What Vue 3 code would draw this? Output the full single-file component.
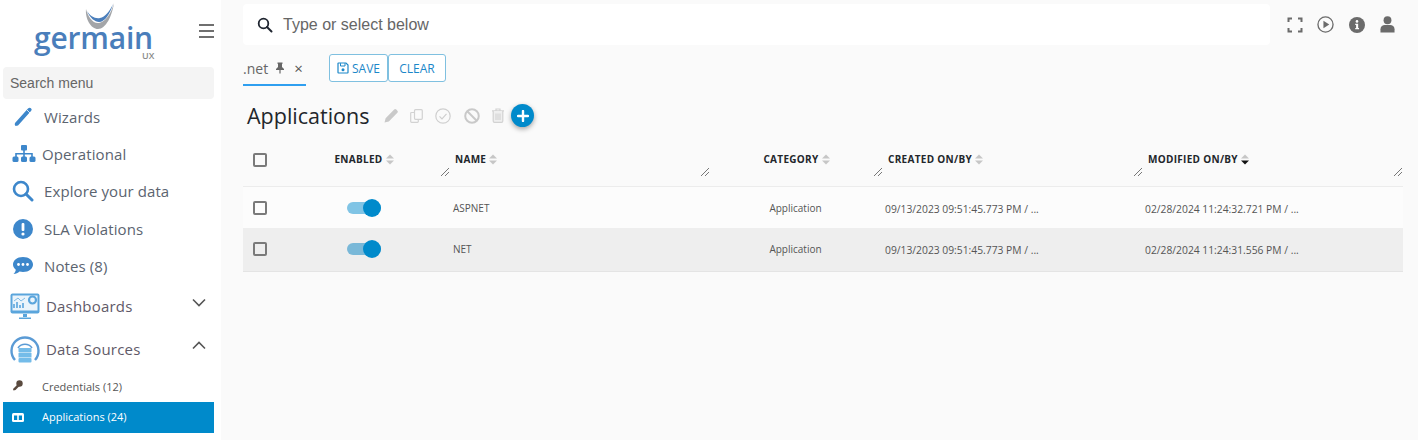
<script setup>
const menu = [
  { label: 'Wizards', icon: 'pencil' },
  { label: 'Operational', icon: 'sitemap' },
  { label: 'Explore your data', icon: 'search' },
  { label: 'SLA Violations', icon: 'alert' },
  { label: 'Notes (8)', icon: 'notes' }
]
const columns = [
  { label: 'ENABLED', cls: 'center' },
  { label: 'NAME', cls: '' },
  { label: 'CATEGORY', cls: 'center' },
  { label: 'CREATED ON/BY', cls: '' },
  { label: 'MODIFIED ON/BY', cls: '', sorted: true }
]
const rows = [
  { name: 'ASPNET', category: 'Application', created: '09/13/2023 09:51:45.773 PM / ...', modified: '02/28/2024 11:24:32.721 PM / ...' },
  { name: 'NET', category: 'Application', created: '09/13/2023 09:51:45.773 PM / ...', modified: '02/28/2024 11:24:31.556 PM / ...' }
]
</script>

<template>
  <div class="page">
    <aside class="sidebar">
      <div class="brand">
        <div class="logo">
          <svg class="swoosh" width="30" height="28" viewBox="0 0 30 28">
            <path d="M1 7 C0 17 6 27 13 27 C21 27 27 14 29 1 C26 12 20 20 14 21 C8 22 3 15 1 7 Z" fill="#a3a5a8" />
            <path d="M2 9 C5 16 10 20 14 20 C20 20 25 12 28 2 C25 9 20 15 15 16 C10 17 5 14 2 9 Z" fill="#4a7ebb" />
          </svg>
          <span class="word">germain</span>
          <span class="ux">UX</span>
        </div>
        <div class="burger"><i></i><i></i><i></i></div>
      </div>
      <div class="search-menu">Search menu</div>
      <nav class="menu">
        <a v-for="m in menu" :key="m.label" class="item">
          <span class="icon">
            <svg v-if="m.icon === 'pencil'" width="22" height="22" viewBox="0 0 22 22">
              <path d="M3 17 L16 2.500 Q17.500 1 19 2.200 Q20.500 3.600 19 5 L6 19.500 L3.500 20 Q2.200 18.600 3 17 Z" fill="#3d87cb" />
              <path d="M15 4 L18 7" stroke="#fff" stroke-width="0.800" />
            </svg>
            <svg v-else-if="m.icon === 'sitemap'" width="24" height="18" viewBox="0 0 24 18">
              <g fill="#3d87cb">
                <rect x="9" y="0" width="6" height="5.500" rx="1" />
                <rect x="0.500" y="11.500" width="6" height="5.500" rx="1.500" />
                <rect x="9" y="11.500" width="6" height="5.500" rx="1.500" />
                <rect x="17.500" y="11.500" width="6" height="5.500" rx="1.500" />
                <path d="M11.200 5 h1.600 v3 h8 v4 h-1.600 v-2.400 h-6.400 v2.400 h-1.600 v-2.400 h-6.400 v2.400 h-1.600 v-4 h8 z" />
              </g>
            </svg>
            <svg v-else-if="m.icon === 'search'" width="22" height="22" viewBox="0 0 22 22">
              <circle cx="9" cy="9" r="7" fill="none" stroke="#3d87cb" stroke-width="2.600" />
              <path d="M14 14 L20 20" stroke="#3d87cb" stroke-width="3" stroke-linecap="round" />
            </svg>
            <svg v-else-if="m.icon === 'alert'" width="22" height="22" viewBox="0 0 22 22">
              <circle cx="11" cy="11" r="10" fill="#3d87cb" />
              <rect x="9.600" y="5" width="2.800" height="8" rx="1" fill="#fff" />
              <circle cx="11" cy="16" r="1.600" fill="#fff" />
            </svg>
            <svg v-else width="22" height="20" viewBox="0 0 22 20">
              <path d="M11 1 C17 1 21 4.500 21 8.500 C21 12.500 17 16 11 16 C9.800 16 8.600 15.800 7.500 15.500 C6 17 4 18 1.500 18 C3 16.500 3.700 15 3.800 13.700 C2 12.300 1 10.500 1 8.500 C1 4.500 5 1 11 1 Z" fill="#3d87cb" />
              <circle cx="6.500" cy="8.500" r="1.400" fill="#fff" />
              <circle cx="11" cy="8.500" r="1.400" fill="#fff" />
              <circle cx="15.500" cy="8.500" r="1.400" fill="#fff" />
            </svg>
          </span>
          <span class="item-label" :class="{ tight: m.icon === 'sitemap' }">{{ m.label }}</span>
        </a>
      </nav>
      <div class="group">
        <svg width="30" height="27" viewBox="0 0 30 27">
          <rect x="0.500" y="0.500" width="29" height="20" rx="2" fill="#5aa5dc" />
          <rect x="2.500" y="2.500" width="25" height="15" fill="#eaf4fb" />
          <path d="M4 15 v-4 M7 15 v-6 M10 15 v-3 M13 15 v-5" stroke="#5aa5dc" stroke-width="1.600" />
          <path d="M4 8 L8 5 L11 8 L15 5" fill="none" stroke="#7fbbe6" stroke-width="1" />
          <circle cx="22.500" cy="7" r="3.500" fill="none" stroke="#5aa5dc" stroke-width="2.200" />
          <path d="M13 21 h4 v3 h-4 z M9 24.500 h12 v1.500 h-12 z" fill="#5aa5dc" />
        </svg>
        <span>Dashboards</span>
        <svg class="chev" width="14" height="9" viewBox="0 0 14 9"><path d="M1 1.500 L7 7.500 L13 1.500" fill="none" stroke="#555" stroke-width="1.600" /></svg>
      </div>
      <div class="group">
        <svg width="30" height="28" viewBox="0 0 30 28">
          <path d="M5 25 A13.500 13.500 0 1 1 25 25" fill="none" stroke="#5b9bd5" stroke-width="2.400" />
          <path d="M8 13 A8.500 8.500 0 0 1 22 13" fill="none" stroke="#5b9bd5" stroke-width="1.600" />
          <rect x="8.500" y="13" width="13" height="4.500" rx="1" fill="#74bce9" />
          <rect x="8.500" y="18" width="13" height="4.500" fill="#74bce9" />
          <rect x="8.500" y="23" width="13" height="4.500" rx="1" fill="#74bce9" />
        </svg>
        <span>Data Sources</span>
        <svg class="chev" width="14" height="9" viewBox="0 0 14 9"><path d="M1 7.500 L7 1.500 L13 7.500" fill="none" stroke="#555" stroke-width="1.600" /></svg>
      </div>
      <div class="sub">
        <svg width="11" height="11" viewBox="0 0 11 11">
          <circle cx="7.500" cy="3.500" r="3.200" fill="#5a4a3f" />
          <path d="M6 4 L1 9 L1.500 10.500 L3.500 10 L8 5.500 Z" fill="#5a4a3f" />
        </svg>
        <span>Credentials (12)</span>
      </div>
      <div class="sub active">
        <svg width="12" height="9" viewBox="0 0 12 9">
          <rect x="0" y="0" width="12" height="9" rx="1.500" fill="#fff" />
          <rect x="2" y="2.500" width="3.200" height="4.500" fill="#008acb" />
          <rect x="6.800" y="2.500" width="3.200" height="4.500" fill="#008acb" />
        </svg>
        <span>Applications (24)</span>
      </div>
    </aside>

    <main class="main">
      <header class="topbar">
        <div class="searchbox">
          <svg width="16" height="16" viewBox="0 0 16 16">
            <circle cx="6.500" cy="6.500" r="4.800" fill="none" stroke="#1f2530" stroke-width="1.800" />
            <path d="M10 10 L14.500 14.500" stroke="#1f2530" stroke-width="2" stroke-linecap="round" />
          </svg>
          <span>Type or select below</span>
        </div>
        <div class="top-icons">
          <svg width="16" height="16" viewBox="0 0 16 16">
            <path d="M1.500 5 V1.500 H5 M11 1.500 H14.500 V5 M14.500 11 V14.500 H11 M5 14.500 H1.500 V11" fill="none" stroke="#6b6b6b" stroke-width="2" />
          </svg>
          <svg width="17" height="17" viewBox="0 0 18 18">
            <circle cx="9" cy="9" r="8" fill="none" stroke="#6b6b6b" stroke-width="1.400" />
            <path d="M6.800 5 L13 9 L6.800 13 Z" fill="#6b6b6b" />
          </svg>
          <svg width="16" height="16" viewBox="0 0 18 18">
            <circle cx="9" cy="9" r="9" fill="#6b6b6b" />
            <circle cx="9" cy="5" r="1.500" fill="#fff" />
            <path d="M7 7.500 H10.300 V12.300 H11.300 V13.800 H7 V12.300 H8 V9 H7 Z" fill="#fff" />
          </svg>
          <svg width="15" height="17" viewBox="0 0 16 18">
            <circle cx="8" cy="4.500" r="4.200" fill="#6b6b6b" />
            <path d="M0.500 17.500 V14 C0.500 11 3 9.500 5 9.500 H11 C13 9.500 15.500 11 15.500 14 V17.500 Z" fill="#6b6b6b" />
          </svg>
        </div>
      </header>

      <div class="tabs">
        <div class="tab">
          <span class="tab-name">.net</span>
          <svg width="10" height="12" viewBox="0 0 10 12"><path d="M2.500 0.500 H7.500 V1.800 L7 2 V5 L9 7 V8 H5.600 V11.500 H4.400 V8 H1 V7 L3 5 V2 L2.500 1.800 Z" fill="#666" /></svg>
          <span class="tab-x">×</span>
        </div>
        <div class="btns">
          <button class="btn save">
            <svg width="12" height="12" viewBox="0 0 12 12">
              <path d="M1 1.500 A0.500 0.500 0 0 1 1.500 1 H9 L11 3 V10.500 A0.500 0.500 0 0 1 10.500 11 H1.500 A0.500 0.500 0 0 1 1 10.500 Z" fill="none" stroke="#1b87c9" stroke-width="1.200" />
              <path d="M3.500 1.200 V4 H8 V1.200" fill="none" stroke="#1b87c9" />
              <circle cx="6" cy="7.700" r="1.500" fill="#1b87c9" />
            </svg>
            SAVE
          </button>
          <button class="btn clear">CLEAR</button>
        </div>
      </div>

      <div class="title-row">
        <h1>Applications</h1>
        <div class="actions">
          <svg width="15" height="15" viewBox="0 0 14 14"><path d="M0.500 13.500 L1.500 9.500 L9.500 1.500 Q10.500 0.500 11.500 1.500 L12.500 2.500 Q13.500 3.500 12.500 4.500 L4.500 12.500 Z" fill="#c9c9c9" /></svg>
          <svg width="13" height="14" viewBox="0 0 13 14">
            <rect x="4.500" y="0.700" width="7.800" height="9.600" rx="1" fill="none" stroke="#d2d2d2" stroke-width="1.200" />
            <path d="M4 3.500 H1.500 Q0.700 3.500 0.700 4.300 V12.500 Q0.700 13.300 1.500 13.300 H7.500 Q8.300 13.300 8.300 12.500 V10.500" fill="none" stroke="#d2d2d2" stroke-width="1.200" />
          </svg>
          <svg class="check" width="16" height="16" viewBox="0 0 16 16">
            <circle cx="8" cy="8" r="7.200" fill="none" stroke="#cfcfcf" stroke-width="1.200" />
            <path d="M4.500 8.300 L7 10.800 L11.500 5.800" fill="none" stroke="#cfcfcf" stroke-width="1.200" />
          </svg>
          <svg class="ban" width="16" height="16" viewBox="0 0 16 16">
            <circle cx="8" cy="8" r="6.800" fill="none" stroke="#c9c9c9" stroke-width="2" />
            <path d="M3.300 3.300 L12.700 12.700" stroke="#c9c9c9" stroke-width="2" />
          </svg>
          <svg width="14" height="15" viewBox="0 0 13 15">
            <path d="M0.500 2.800 H12.500 M4.500 2.500 V1 H8.500 V2.500" fill="none" stroke="#d2d2d2" stroke-width="1.200" />
            <path d="M1.700 3 V13 Q1.700 14.300 3 14.300 H10 Q11.300 14.300 11.300 13 V3" fill="#efefef" stroke="#d2d2d2" stroke-width="1.200" />
            <path d="M4.500 5.500 V12 M6.500 5.500 V12 M8.500 5.500 V12" stroke="#cfcfcf" />
          </svg>
          <button class="fab" aria-label="Add">
            <svg width="12" height="12" viewBox="0 0 12 12"><path d="M6 1 V11 M1 6 H11" stroke="#fff" stroke-width="2.400" stroke-linecap="round" /></svg>
          </button>
        </div>
      </div>

      <section class="table">
        <div class="grid head">
          <div class="cell chk"><span class="box"></span></div>
          <div v-for="c in columns" :key="c.label" class="hcell" :class="c.cls">
            <span class="hlabel">{{ c.label }}</span>
            <svg class="sort" width="8" height="11" viewBox="0 0 8 11">
              <path d="M4 0.500 L8 4.500 H0 Z" fill="#c6c6c6" />
              <path d="M4 10.500 L8 6.500 H0 Z" :fill="c.sorted ? '#111' : '#c6c6c6'" />
            </svg>
            <svg class="grip" width="8" height="8" viewBox="0 0 8 8">
              <path d="M0 8 L8 0 M4 8 L8 4" stroke="#555" stroke-width="0.800" />
            </svg>
          </div>
        </div>
        <div v-for="(r, i) in rows" :key="r.name" class="grid row" :class="{ alt: i === 1 }">
          <div class="cell chk"><span class="box"></span></div>
          <div class="cell center">
            <span class="toggle" :class="{ dim: i === 1 }"><i></i></span>
          </div>
          <div class="cell name">{{ r.name }}</div>
          <div class="cell center cat">{{ r.category }}</div>
          <div class="cell date">{{ r.created }}</div>
          <div class="cell date">{{ r.modified }}</div>
        </div>
      </section>
    </main>
  </div>
</template>

<style>
html, body { margin: 0; background: #fafafa; }
</style>

<style scoped>
* { box-sizing: border-box; }
.page {
  display: flex;
  width: 1418px;
  height: 440px;
  overflow: hidden;
  font-family: "Open Sans", sans-serif;
  color: #333;
}
.sidebar {
  width: 221px;
  flex: none;
  background: #fff;
  padding: 0 7px 0 3px;
}
.brand {
  position: relative;
  height: 67px;
}
.logo {
  position: absolute;
  left: 31px;
  top: 0;
  width: 122px;
  height: 62px;
}
.swoosh { position: absolute; left: 51px; top: 2px; }
.word {
  position: absolute;
  left: 0;
  top: 24px;
  font-weight: 600;
  font-size: 30px;
  line-height: 28px;
  letter-spacing: -0.2px;
  color: #4a7ebb;
}
.ux {
  position: absolute;
  left: 108px;
  top: 52px;
  font-size: 9px;
  line-height: 8px;
  color: #8a8a8a;
  font-weight: 600;
}
.burger {
  position: absolute;
  left: 196px;
  top: 24px;
  width: 15px;
  display: flex;
  flex-direction: column;
  gap: 4px;
}
.burger i { display: block; height: 2px; background: #6f6f6f; }
.search-menu {
  height: 32px;
  background: #f4f4f4;
  border-radius: 4px;
  padding-left: 7px;
  font-family: "Liberation Sans", sans-serif;
  font-size: 14px;
  line-height: 32px;
  color: #666;
}
.menu { display: flex; flex-direction: column; margin-top: -1px; }
.item {
  height: 37.4px;
  display: flex;
  align-items: center;
  position: relative;
  padding-left: 41px;
  font-size: 15px;
  letter-spacing: 0.1px;
  color: #5b6470;
}
.icon {
  position: absolute;
  left: 9px;
  top: 50%;
  transform: translateY(-50%);
  display: flex;
}
.item-label.tight { margin-left: -2px; }
.group {
  height: 43px;
  display: flex;
  align-items: center;
  position: relative;
  padding-left: 7px;
  font-size: 15px;
  letter-spacing: 0.2px;
  color: #5f5a68;
  gap: 6px;
}
.group .chev { position: absolute; left: 189px; top: 13px; }
.sub {
  height: 31px;
  display: flex;
  align-items: center;
  position: relative;
  padding-left: 39px;
  font-size: 11px;
  color: #555;
}
.sub svg { position: absolute; left: 9px; top: 9px; }
.sub.active { background: #008acb; color: #fff; padding-bottom: 2px; }
.sub.active svg { top: 11px; }

.main {
  flex: 1;
  min-width: 0;
  background: #fafafa;
  padding: 4px 15px 0 22px;
}
.topbar {
  display: flex;
  align-items: center;
  height: 41px;
}
.searchbox {
  width: 1027px;
  height: 41px;
  background: #fff;
  border-radius: 4px;
  display: flex;
  align-items: center;
  gap: 10px;
  padding-left: 14px;
  font-family: "Liberation Sans", sans-serif;
  font-size: 16px;
  color: #666;
}
.top-icons {
  display: flex;
  align-items: center;
  gap: 14px;
  margin-left: 17px;
}
.top-icons svg:nth-child(n + 3) { margin-left: 1px; }
.tabs {
  display: flex;
  align-items: flex-start;
  height: 45px;
  padding-top: 9px;
}
.tab {
  width: 63px;
  height: 32px;
  border-bottom: 2px solid #2f9ff0;
  display: flex;
  align-items: center;
  font-size: 14px;
  color: #666;
  padding-bottom: 2px;
}
.tab-name { margin-right: 7px; }
.tab-x { margin-left: 9px; font-size: 15px; line-height: 14px; color: #555; }
.btns { display: flex; margin-left: 23px; }
.btn {
  height: 28px;
  border: 1px solid #7fc0e0;
  border-radius: 3px;
  background: #fff;
  color: #1b87c9;
  font-family: "Open Sans", sans-serif;
  font-size: 12px;
  display: flex;
  align-items: center;
  justify-content: center;
  gap: 3px;
  padding: 0;
}
.save { width: 59px; }
.clear { width: 58px; }
.title-row {
  display: flex;
  align-items: center;
  height: 51px;
  padding-left: 4px;
}
h1 {
  margin: 0;
  font-size: 21.5px;
  font-weight: 400;
  color: #22262b;
}
.actions {
  display: flex;
  align-items: center;
  gap: 11px;
  margin-left: 15px;
}
.check { margin-left: 1px; }
.ban { margin-left: 2px; }
.fab {
  width: 23px;
  height: 23px;
  border-radius: 50%;
  border: 0;
  padding: 0;
  background: #008acb;
  box-shadow: 0 2px 5px rgba(0, 0, 0, 0.35);
  display: flex;
  align-items: center;
  justify-content: center;
  margin-left: -5px;
}
.table { width: 1160px; }
.grid {
  display: grid;
  grid-template-columns: 35px 172px 260px 173px 260px 260px;
}
.head {
  height: 46px;
  border-bottom: 1px solid #ececec;
}
.hcell {
  position: relative;
  display: flex;
  align-items: flex-start;
  gap: 3px;
  padding: 11px 0 0 5px;
  font-size: 10px;
  line-height: 14px;
  font-weight: 700;
  color: #22262b;
  letter-spacing: 0.3px;
}
.hcell.center { justify-content: center; padding-left: 0; }
.sort { margin-top: 2px; }
.grip { position: absolute; right: 1px; bottom: 10px; }
.row {
  height: 41px;
  background: #fcfcfc;
}
.row.alt {
  height: 43.500px;
  background: #eeeeee;
  border-bottom: 1px solid #e4e4e4;
}
.cell {
  display: flex;
  align-items: center;
  font-size: 10px;
  color: #555;
}
.cell.center { justify-content: center; }
.cell.name { padding-left: 3px; }
.cell.cat { padding-right: 2px; }
.cell.date { padding: 2px 0 0 2px; font-size: 10.300px; }
.chk { padding-left: 10px; }
.head .chk { align-items: flex-start; padding-top: 12px; }
.box {
  display: block;
  width: 14px;
  height: 14px;
  border: 2px solid #7a7a7a;
  border-radius: 2px;
}
.toggle {
  position: relative;
  display: block;
  width: 34px;
  height: 12px;
  border-radius: 6px;
  background: #80c4e5;
}
.toggle.dim { background: #79b8d8; }
.toggle i {
  position: absolute;
  right: 0;
  top: -3px;
  width: 18px;
  height: 18px;
  border-radius: 50%;
  background: #008acb;
}
</style>
